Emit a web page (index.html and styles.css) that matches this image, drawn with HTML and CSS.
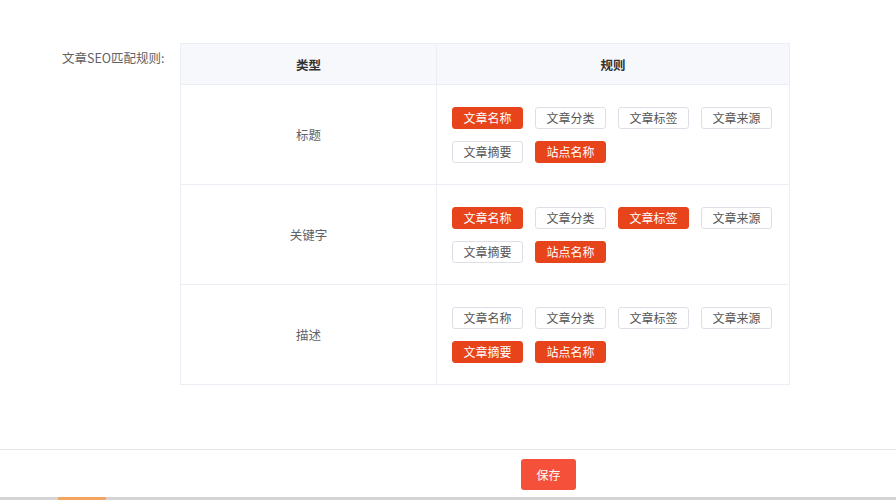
FILE: index.html
```html
<!DOCTYPE html>
<html lang="zh">
<head>
<meta charset="utf-8">
<link rel="stylesheet" href="styles.css">
</head>
<body>
<div class="page">
  <div class="form-row">
    <div class="label">文章SEO匹配规则:</div>
    <table class="rules">
      <thead>
        <tr><th class="c1">类型</th><th class="c2">规则</th></tr>
      </thead>
      <tbody>
        <tr>
          <td class="c1">标题</td>
          <td class="c2"><div class="tags">
            <span class="tag on">文章名称</span><span class="tag">文章分类</span><span class="tag">文章标签</span><span class="tag">文章来源</span><span class="tag">文章摘要</span><span class="tag on">站点名称</span>
          </div></td>
        </tr>
        <tr>
          <td class="c1">关键字</td>
          <td class="c2"><div class="tags">
            <span class="tag on">文章名称</span><span class="tag">文章分类</span><span class="tag on">文章标签</span><span class="tag">文章来源</span><span class="tag">文章摘要</span><span class="tag on">站点名称</span>
          </div></td>
        </tr>
        <tr>
          <td class="c1">描述</td>
          <td class="c2"><div class="tags">
            <span class="tag">文章名称</span><span class="tag">文章分类</span><span class="tag">文章标签</span><span class="tag">文章来源</span><span class="tag on">文章摘要</span><span class="tag on">站点名称</span>
          </div></td>
        </tr>
      </tbody>
    </table>
  </div>
  <div class="footer">
    <button class="save">保存</button>
  </div>
  <div class="strip"><div class="strip-thumb"></div></div>
</div>
</body>
</html>
```
FILE: styles.css
```css
html, body {
  margin: 0;
  padding: 0;
  background: #fff;
}
body {
  font-family: "Noto Sans CJK SC", "Noto Sans", sans-serif;
  font-size: 13px;
  color: #606266;
}
.page {
  width: 896px;
  height: 500px;
  display: flex;
  flex-direction: column;
  overflow: hidden;
}
.form-row {
  display: flex;
  align-items: flex-start;
  padding-top: 43px;
  height: 449px;
  flex: none;
  box-sizing: border-box;
}
.label {
  width: 164px;
  box-sizing: border-box;
  padding-left: 62px;
  padding-top: 5px;
  line-height: 20px;
  white-space: nowrap;
  color: #606266;
  font-size: 12.5px;
  margin-right: 16px;
}
.rules {
  border-collapse: collapse;
  width: 610px;
  border: 1px solid #e6e8ec;
}
.rules th, .rules td {
  border: 1px solid #ebeef5;
  padding: 0;
}
.rules th {
  background: #f7f8fb;
  height: 40px;
  font-weight: bold;
  color: #303133;
  font-size: 12.5px;
  text-align: center;
}
.rules td {
  height: 99px;
}
.rules .c1 {
  width: 255px;
  text-align: center;
}
.rules td.c1 {
  color: #606266;
  font-size: 12.5px;
}
.rules td.c2 {
  padding: 0 15px;
}
.tags {
  display: flex;
  flex-wrap: wrap;
  gap: 12px 12px;
}
.tag {
  width: 71px;
  height: 22px;
  box-sizing: border-box;
  border: 1px solid #dcdfe6;
  border-radius: 3px;
  display: flex;
  align-items: center;
  justify-content: center;
  color: #555;
  font-size: 12px;
  background: #fff;
}
.tag.on {
  background: #e8441b;
  border-color: #e8441b;
  color: #fff;
}
.footer {
  border-top: 1px solid #e8e8e8;
  height: 48px;
  flex: none;
  box-sizing: border-box;
  padding-top: 9px;
  padding-left: 521px;
}
.save {
  width: 55px;
  height: 31px;
  border: none;
  border-radius: 3px;
  background: #f5513a;
  color: #fff;
  font-family: "Noto Sans CJK SC", "Noto Sans", sans-serif;
  font-size: 12px;
  padding: 0;
}
.strip {
  height: 3px;
  flex: none;
  background: #d4d4d4;
}
.strip-thumb {
  margin-left: 58px;
  width: 48px;
  height: 3px;
  background: #f4a562;
}
```
